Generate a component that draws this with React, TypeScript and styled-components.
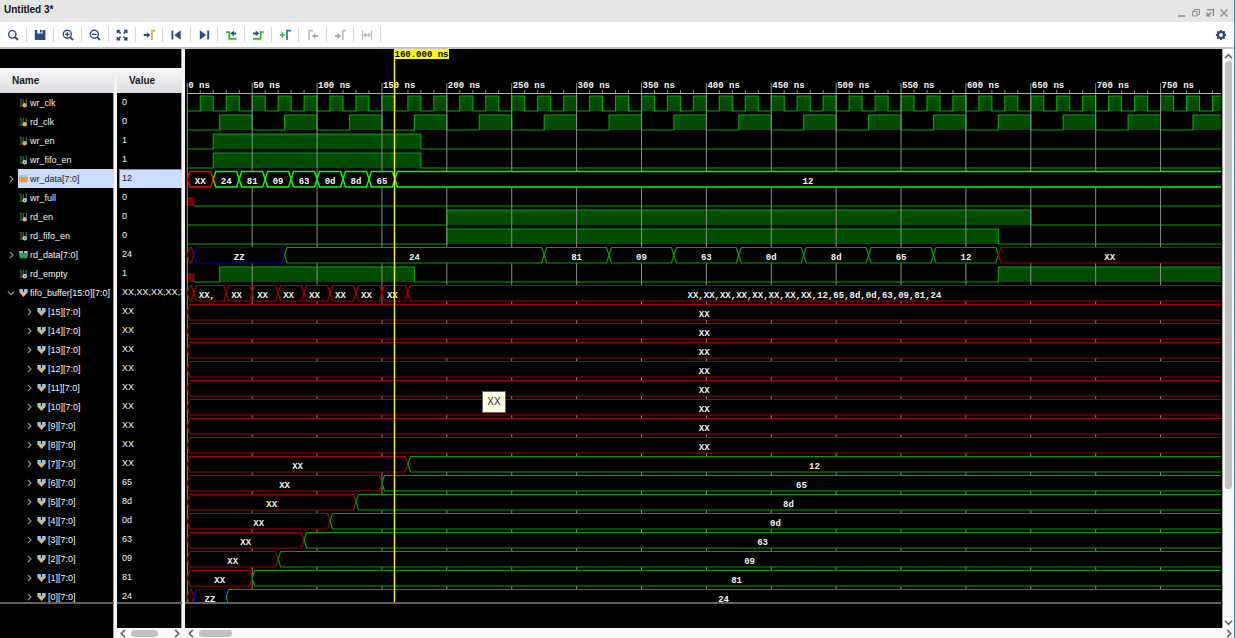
import React, { useLayoutEffect, useRef, useState } from "react";
import styled, { createGlobalStyle } from "styled-components";

const GlobalStyle = createGlobalStyle`
  * { box-sizing: border-box; }
  body { margin: 0; background: #000; font-family: "Liberation Sans", Arial, sans-serif; font-size: 9px; }
  button { appearance: none; border: 0; background: none; padding: 0; margin: 0; font: inherit; color: inherit; cursor: pointer; }
  ul { list-style: none; margin: 0; padding: 0; }
`;

const ROW = 19;
const RULER = 44;
const ORIGIN = 2.3;
const SCALE = 1.2977;
const NAVY = "#2b4a85";

/* ---------- layout ---------- */

const Window = styled.div`
  display: flex;
  flex-direction: column;
  height: 100vh;
  overflow: hidden;
  border-right: 1px solid #4f86d8;
`;
const TitleBar = styled.header`
  flex: 0 0 22px;
  display: flex;
  align-items: center;
  justify-content: space-between;
  padding: 0 5px 3px 4px;
  background: #e6e6e6;
`;
const Title = styled.h1`
  margin: 0;
  font-size: 10px;
  line-height: 12px;
  font-weight: bold;
  color: #111;
`;
const WindowButtons = styled.div`
  display: flex;
  gap: 4px;
  padding-top: 6px;
`;
const WindowButton = styled.button`
  width: 10px;
  height: 10px;
  svg { display: block; }
`;
const Toolbar = styled.div`
  flex: 0 0 27px;
  display: flex;
  justify-content: space-between;
  background: #fff;
  border-bottom: 2px solid #c4c4c8;
`;
const Tools = styled.div`
  display: flex;
  width: 381px;
  padding: 5px 0;
`;
const Tool = styled.button`
  flex: 1;
  display: flex;
  align-items: center;
  justify-content: center;
  border-right: 1px solid #d8d8d8;
`;
const SettingsButton = styled.button`
  display: flex;
  align-items: center;
  margin-right: 7px;
`;
const Main = styled.main`
  flex: 1;
  min-height: 0;
  display: flex;
  background: #000;
`;
const SidePanels = styled.section`
  flex: 0 0 185px;
  min-width: 0;
  display: flex;
  flex-direction: column;
  padding-top: 19px;
  border-right: 3px solid #f4f4f4;
  box-shadow: inset -1px 0 #a0a0a0;
`;
const Columns = styled.div`
  flex: 1;
  min-height: 0;
  display: flex;
`;
const Column = styled.div<{ $width: number; $divided?: boolean }>`
  flex: 0 0 ${(p) => p.$width}px;
  min-width: 0;
  display: flex;
  flex-direction: column;
  min-height: 0;
  ${(p) => p.$divided && "border-right: 3px solid #f4f4f4; box-shadow: inset -1px 0 #a0a0a0;"}
`;
const ColumnHeader = styled.div<{ $indent: number }>`
  flex: 0 0 25px;
  padding-left: ${(p) => p.$indent}px;
  line-height: 25px;
  font-size: 10px;
  font-weight: bold;
  color: #1a1a1a;
  background: linear-gradient(#f8f8fa, #dcdce0);
`;
const Viewport = styled.div`
  flex: 1;
  min-height: 0;
  overflow: hidden;
  border-bottom: 2px solid #606060;
`;
const Spacer = styled.div<{ $height: number }>`
  flex: 0 0 ${(p) => p.$height}px;
`;
const NameRow = styled.li<{ $child?: boolean }>`
  display: flex;
  height: ${ROW}px;
  padding-left: ${(p) => (p.$child ? 25 : 7)}px;
  color: #f4f4f4;
`;
const Expander = styled.button`
  width: 8px;
  svg { display: block; }
`;
const NameLabel = styled.span<{ $selected?: boolean }>`
  flex: 1;
  min-width: 0;
  display: flex;
  align-items: center;
  gap: 2px;
  margin-left: 3px;
  padding-left: 1px;
  white-space: nowrap;
  font-size: 9px;
  background: ${(p) => (p.$selected ? "#ccdcff" : "none")};
  color: ${(p) => (p.$selected ? "#222" : "inherit")};
  svg { flex: none; }
`;
const ValueRow = styled.li<{ $selected?: boolean }>`
  height: ${ROW}px;
  line-height: ${ROW}px;
  margin-left: 2px;
  padding-left: 3px;
  overflow: hidden;
  white-space: nowrap;
  font-size: 9px;
  color: ${(p) => (p.$selected ? "#222" : "#f4f4f4")};
  background: ${(p) => (p.$selected ? "#ccdcff" : "none")};
  box-shadow: ${(p) => (p.$selected ? "inset 1px 1px #5b93c8" : "none")};
`;
const WavePanel = styled.section`
  flex: 1;
  min-width: 0;
  display: flex;
  flex-direction: column;
`;
const WaveBody = styled.div`
  flex: 1;
  min-height: 0;
  display: flex;
`;
const WaveArea = styled.div`
  flex: 1;
  min-width: 0;
  display: flex;
  flex-direction: column;
  position: relative;
  padding-right: 1px;
  border-right: 1px solid #a0a0a0;
`;
const WaveSvg = styled.svg`
  display: block;
  text {
    font-family: "Liberation Mono", "Courier New", monospace;
    font-size: 9px;
    font-weight: bold;
    fill: #f4f4f4;
  }
  text.cursor { fill: #000; }
`;
const Tooltip = styled.div`
  position: absolute;
  left: 297px;
  top: 342px;
  width: 24px;
  height: 22px;
  border: 1px solid #666;
  background: #ffffe4;
  color: #333;
  font-size: 10px;
  line-height: 20px;
  text-align: center;
`;
const VScroll = styled.div`
  flex: 0 0 11px;
  display: flex;
  flex-direction: column;
  align-items: center;
  padding: 2px 0 1px;
  background: #fafafa;
`;
const HScroll = styled.div`
  flex: 0 0 10px;
  display: flex;
  align-items: center;
  gap: 3px;
  padding: 0 1px;
  background: #fafafa;
`;
const ScrollArrow = styled.button`
  flex: 0 0 10px;
  svg { display: block; margin: auto; }
`;
const Track = styled.div<{ $vertical?: boolean }>`
  flex: 1;
  display: flex;
  flex-direction: ${(p) => (p.$vertical ? "column" : "row")};
  min-height: 0;
`;
const Thumb = styled.div<{ $length: string; $vertical?: boolean }>`
  border-radius: 4px;
  background: #c1c1c1;
  width: ${(p) => (p.$vertical ? "7px" : p.$length)};
  height: ${(p) => (p.$vertical ? p.$length : "7px")};
`;

/* ---------- icons ---------- */

const Chevron = ({ dir, size = 9, color = "#666", width = 1.8 }: { dir: "left" | "right" | "up" | "down"; size?: number; color?: string; width?: number }) => {
  const d = { left: "M6.5 1 2.5 5l4 4", right: "M3.5 1l4 4-4 4", up: "M1 7l4-4 4 4", down: "M1 3l4 4 4-4" }[dir];
  return (
    <svg width={size} height={size} viewBox="0 0 10 10" fill="none" stroke={color} strokeWidth={width}>
      <path d={d} />
    </svg>
  );
};

const Art = ({ children, size = 14 }: { children: React.ReactNode; size?: number }) => (
  <svg width={size} height={size} viewBox="0 0 14 14" fill="none" stroke={NAVY} strokeWidth="1.4">
    {children}
  </svg>
);

const TOOLS: [string, React.ReactNode][] = [
  ["Search", <Art><circle cx="6.3" cy="6.3" r="3.7" /><path d="M9 9l3 3" strokeWidth="1.8" /></Art>],
  ["Save", <Art><path d="M1.8 2h10.6v10H1.8z" fill={NAVY} stroke="none" /><path d="M4.2 1.5h5.4v4H4.2z" fill="#fff" stroke="none" /><path d="M7 1.8h1.7v2.8H7z" fill={NAVY} stroke="none" /></Art>],
  ["Zoom in", <Art><circle cx="6.3" cy="6.3" r="4" /><path d="M9.2 9.2l2.8 2.8" strokeWidth="1.8" /><path d="M4 6.3h4.6M6.3 4v4.6" strokeWidth="1.3" /></Art>],
  ["Zoom out", <Art><circle cx="6.3" cy="6.3" r="4" /><path d="M9.2 9.2l2.8 2.8" strokeWidth="1.8" /><path d="M4 6.3h4.6" strokeWidth="1.3" /></Art>],
  ["Zoom fit", <Art><path d="M2.4 5.2V2.4h2.8M9 2.4h2.8v2.8M11.8 9v2.8H9M5.2 11.8H2.4V9" strokeWidth="1.5" /><path d="M2.6 2.6l3 3M11.6 2.6l-3 3M11.6 11.6l-3-3M2.6 11.6l3-3" strokeWidth="1.5" /></Art>],
  ["Go to cursor", <Art><path d="M1.8 6h3V4.2L8.4 7 4.8 9.8V8h-3z" fill={NAVY} stroke="none" /><path d="M13.2 2.8H10V12" stroke="#d9b84a" strokeWidth="1.9" /></Art>],
  ["Go to time 0", <Art><path d="M3.4 2.5v9" strokeWidth="1.9" /><path d="M11.7 2.2v9.6L5.3 7z" fill={NAVY} stroke="none" /></Art>],
  ["Go to last time", <Art><path d="M11.2 2.5v9" strokeWidth="1.9" /><path d="M2.8 2.2v9.6L9.2 7z" fill={NAVY} stroke="none" /></Art>],
  ["Previous transition", <Art><path d="M2 4.2h3.4v6.6h7" stroke="#35b52e" strokeWidth="1.8" /><path d="M12.2 4.4H9.8V2.6L6.4 5.4l3.4 2.8V6.4h2.4z" fill={NAVY} stroke="none" /></Art>],
  ["Next transition", <Art><path d="M2 10.8h7.6V4.2H12.6" stroke="#35b52e" strokeWidth="1.8" /><path d="M2 4.4h2.8V2.6l3.4 2.8-3.4 2.8V6.4H2z" fill={NAVY} stroke="none" /></Art>],
  ["Add marker", <Art><path d="M1.8 7h5.4M4.5 4.3v5.4" stroke="#35b52e" strokeWidth="1.6" /><path d="M13 2.6H9V12" stroke="#1f78a8" strokeWidth="1.7" /></Art>],
  ["Previous marker", <Art><path d="M7 2.6H3V12" stroke="#bbb" strokeWidth="1.6" /><path d="M12 7H9.4V5L5.8 8l3.6 3V9H12z" fill="#aaa" stroke="none" /></Art>],
  ["Next marker", <Art><path d="M12.8 2.6H9.8V12" stroke="#bbb" strokeWidth="1.6" /><path d="M1.8 7h2.8V5L8.2 8l-3.6 3V9H1.8z" fill="#aaa" stroke="none" /></Art>],
  ["Swap cursors", <Art><path d="M2.5 2.5v9M11.5 2.5v9M4 7h6M5.8 5.2L4 7l1.8 1.8M8.2 5.2L10 7 8.2 8.8" stroke="#bbb" strokeWidth="1.3" /></Art>],
];

const Gear = () => (
  <svg width="12" height="12" viewBox="0 0 12 12" fill="none" stroke={NAVY}>
    <circle cx="6" cy="6" r="3" strokeWidth="2.2" />
    <path d="M6 .9v1.6M6 9.5v1.6M.9 6h1.6M9.5 6h1.6M2.4 2.4l1.1 1.1M8.5 8.5l1.1 1.1M9.6 2.4L8.5 3.5M3.5 8.5L2.4 9.6" strokeWidth="1.9" />
  </svg>
);

type IconKind = "in" | "net" | "busIn" | "busNet" | "array";

const SignalIcon = ({ kind }: { kind: IconKind }) => {
  if (kind === "in" || kind === "net") {
    const dot = kind === "in" ? "#f3a947" : "#c8cccc";
    return (
      <svg width="9" height="10" viewBox="0 0 9 10" fill="none">
        <path d="M.6 1.3h1.4v6.4M.6 8.1h2.6" stroke="#2f8a4a" strokeWidth="1" />
        <path d="M4.2 .9v5h1.6M7.3 .9v5" stroke="#37895a" strokeWidth="1" />
        <circle cx="5.7" cy="7.2" r="2.3" fill={dot} />
        {kind === "net" && <circle cx="5.7" cy="7.2" r=".8" fill="#444" />}
      </svg>
    );
  }
  const main = kind === "busIn" ? "#e79a3c" : "#3c9a50";
  return (
    <svg width="9" height="10" viewBox="0 0 9 10">
      <path d="M.4 1h3.5v5H1.8L.4 4.8zM5.1 1h3.5v3.8L7.2 6H5.1z" fill="#9fc6da" />
      {kind === "array" ? (
        <path d="M4.5 3.4l2.7 2.7-2.7 2.8-2.7-2.8z" fill="#f6b258" />
      ) : (
        <path d="M.4 3h8.2v4.2L7.4 8.6H5L4.5 7 4 8.6H1.6L.4 7.2z" fill={main} />
      )}
    </svg>
  );
};

/* ---------- signal data ---------- */

type Seg = { from: number; to?: number; kind: "X" | "Z" | "V"; label?: string; left?: boolean };
type Signal = {
  name: string;
  value: string;
  icon: IconKind;
  selected?: boolean;
  open?: boolean;
  child?: boolean;
  unknown?: number;
  highs?: [number, number][];
  bus?: Seg[];
};

const repeat = (start: number, high: number, period: number): [number, number][] =>
  Array.from({ length: Math.ceil(3000 / period) }, (_, i) => [start + i * period, start + i * period + high]);

const values = (start: number, step: number, labels: string[]): Seg[] =>
  labels.map((label, i) => ({ from: start + i * step, to: start + (i + 1) * step, kind: "V", label }));

const LONG = 3000;

const SETTLED: [number, string][] = [[170, "12"], [150, "65"], [130, "8d"], [110, "0d"], [90, "63"], [70, "09"], [50, "81"]];

const elements: Signal[] = Array.from({ length: 16 }, (_, k) => {
  const index = 15 - k;
  const base = { name: `[${index}][7:0]`, icon: "array" as IconKind, child: true };
  if (index > 7) return { ...base, value: "XX", bus: [{ from: 0, kind: "X", label: "XX" }] };
  if (index === 0)
    return { ...base, value: "24", bus: [{ from: 0, to: 5, kind: "X" }, { from: 5, to: 30, kind: "Z", label: "ZZ" }, { from: 30, kind: "V", label: "24" }] };
  const [at, label] = SETTLED[7 - index];
  return { ...base, value: index === 7 ? "XX" : label, bus: [{ from: 0, to: at, kind: "X", label: "XX" }, { from: at, kind: "V", label }] };
});

const SIGNALS: Signal[] = [
  { name: "wr_clk", value: "0", icon: "in", highs: repeat(10, 10, 20) },
  { name: "rd_clk", value: "0", icon: "in", highs: repeat(25, 25, 50) },
  { name: "wr_en", value: "1", icon: "in", highs: [[20, 180]] },
  { name: "wr_fifo_en", value: "1", icon: "net", highs: [[20, 180]] },
  {
    name: "wr_data[7:0]", value: "12", icon: "busIn", selected: true, open: false,
    bus: [{ from: 0, to: 20, kind: "X", label: "XX" }, ...values(20, 20, ["24", "81", "09", "63", "0d", "8d", "65"]), { from: 160, kind: "V", label: "12" }],
  },
  { name: "wr_full", value: "0", icon: "net", unknown: 5, highs: [] },
  { name: "rd_en", value: "0", icon: "in", highs: [[200, 650]] },
  { name: "rd_fifo_en", value: "0", icon: "net", highs: [[200, 625]] },
  {
    name: "rd_data[7:0]", value: "24", icon: "busNet", open: false,
    bus: [
      { from: 0, to: 5, kind: "X" }, { from: 5, to: 75, kind: "Z", label: "ZZ" }, { from: 75, to: 275, kind: "V", label: "24" },
      ...values(275, 50, ["81", "09", "63", "0d", "8d", "65", "12"]), { from: 625, kind: "X", label: "XX" },
    ],
  },
  { name: "rd_empty", value: "1", icon: "net", unknown: 5, highs: [[25, 175], [625, LONG]] },
  {
    name: "fifo_buffer[15:0][7:0]", value: "XX,XX,XX,XX,XX", icon: "array", open: true,
    bus: [
      { from: 0, to: 5, kind: "X" }, { from: 5, to: 30, kind: "X", label: "XX,", left: true },
      ...[30, 50, 70, 90, 110, 130, 150].map((from): Seg => ({ from, to: from + 20, kind: "X", label: "XX", left: true })),
      { from: 170, kind: "X", label: "XX,XX,XX,XX,XX,XX,XX,XX,12,65,8d,0d,63,09,81,24" },
    ],
  },
  ...elements,
];

/* ---------- waveform drawing ---------- */

const px = (t: number) => ORIGIN + t * SCALE;

const Digital = ({ signal, y, end }: { signal: Signal; y: number; end: number }) => {
  const highs = (signal.highs ?? []).filter(([a]) => px(a) < end);
  const start = signal.unknown ?? 0;
  let edge = `M${px(start)} ${y + 18}`;
  highs.forEach(([a, b]) => {
    edge += `H${px(a)}V${y + 3}H${Math.min(px(b), end)}`;
    if (px(b) < end) edge += `V${y + 18}`;
  });
  edge += `H${end}`;
  return (
    <g fill="none">
      {highs.map(([a, b]) => (
        <rect key={a} x={px(a)} y={y + 3} width={Math.min(px(b), end) - px(a)} height={15} fill="#004c00" />
      ))}
      <path d={edge} stroke="#00ac00" strokeWidth="1.1" />
      {signal.unknown && (
        <path d={`M${px(0)} ${y + 18}V${y + 10}H${px(start)}V${y + 18}`} fill="#780000" stroke="#b00000" />
      )}
    </g>
  );
};

const Bus = ({ signal, y, end }: { signal: Signal; y: number; end: number }) => {
  const top = y + 2.5;
  const bottom = y + 18;
  const mid = y + 10;
  const bright = signal.selected;
  return (
    <g>
      {signal.bus!.map((s) => {
        const a = px(s.from);
        const open = s.to === undefined;
        const b = open ? end : px(s.to!);
        const color = s.kind === "X" ? (bright ? "#ff0000" : "#a80000") : s.kind === "Z" ? "#0000c8" : bright ? "#00ff00" : "#00a400";
        const d = open
          ? `M${b} ${top}H${a + 2.5}L${a} ${mid}L${a + 2.5} ${bottom}H${b}`
          : `M${a} ${mid}L${a + 2.5} ${top}H${b - 2.5}L${b} ${mid}L${b - 2.5} ${bottom}H${a + 2.5}Z`;
        return (
          <g key={s.from}>
            <path d={d} fill="#000" stroke={color} strokeWidth={bright ? 1.5 : 1.2} />
            {s.label && (
              <text x={s.left ? a + 5 : (a + b) / 2} y={y + 15} textAnchor={s.left ? "start" : "middle"}>
                {s.label}
              </text>
            )}
          </g>
        );
      })}
    </g>
  );
};

const Waveform = ({ width }: { width: number }) => {
  const end = width;
  const height = RULER + SIGNALS.length * ROW;
  const ticks = Array.from({ length: Math.ceil(end / SCALE / 10) }, (_, i) => i * 10).filter((t) => px(t) < end);
  const rowY = (i: number) => RULER + i * ROW;
  const cursor = Math.round(px(160) - 1) + 0.5;
  return (
    <WaveSvg width={width} height={height} role="img" aria-label="Signal waveforms">
      {SIGNALS.map((s, i) => s.highs && <Digital key={s.name} signal={s} y={rowY(i)} end={end} />)}
      <path
        d={ticks.map((t) => (t % 50 === 0 ? `M${px(t)} 34V${height}` : `M${px(t)} 41V44`)).join("")}
        stroke="#8c8c8c"
        fill="none"
      />
      <path d={`M${px(0)} 44.5H${end}`} stroke="#b4b4b4" />
      {SIGNALS.map((s, i) => s.bus && <Bus key={s.name} signal={s} y={rowY(i)} end={end} />)}
      {ticks.filter((t) => t % 50 === 0).map((t) => (
        <text key={t} x={px(t) + 1} y={39}>{`${t} ns`}</text>
      ))}
      <path d={`M${cursor} 1V${height}`} stroke="#ffff00" strokeWidth="1.4" />
      <rect x={cursor - 0.5} y={0} width={55} height={10} fill="#ffff00" />
      <text className="cursor" x={cursor} y={8}>160.000 ns</text>
    </WaveSvg>
  );
};

/* ---------- page ---------- */

export default function App() {
  const area = useRef<HTMLDivElement>(null);
  const [width, setWidth] = useState(1036);

  useLayoutEffect(() => {
    const el = area.current;
    if (!el) return;
    const measure = () => setWidth(el.clientWidth);
    measure();
    const observer = new ResizeObserver(measure);
    observer.observe(el);
    return () => observer.disconnect();
  }, []);

  return (
    <Window>
      <GlobalStyle />
      <TitleBar>
        <Title>Untitled 3*</Title>
        <WindowButtons>
          <WindowButton aria-label="Minimize"><svg width="10" height="10" stroke="#8a8a8a" fill="none"><path d="M1 8h7" strokeWidth="1.6" /></svg></WindowButton>
          <WindowButton aria-label="Restore"><svg width="10" height="10" stroke="#8a8a8a" fill="none"><path d="M1.5 3.5h4.5v4.5h-4.5zM3.5 3V1.5H8.5V6.5H6.5" /></svg></WindowButton>
          <WindowButton aria-label="Float"><svg width="10" height="10" stroke="#8a8a8a" fill="none"><path d="M2 1.6h6.4v6.4M6 4.2L3 7.2M2 4.4v3.4h3.4" strokeWidth="1.3" /></svg></WindowButton>
          <WindowButton aria-label="Close"><svg width="10" height="10" stroke="#8a8a8a" fill="none"><path d="M1.5 1.5l7 7M8.5 1.5l-7 7" strokeWidth="1.4" /></svg></WindowButton>
        </WindowButtons>
      </TitleBar>
      <Toolbar>
        <Tools>
          {TOOLS.map(([label, icon]) => (
            <Tool key={label} aria-label={label}>{icon}</Tool>
          ))}
        </Tools>
        <SettingsButton aria-label="Settings"><Gear /></SettingsButton>
      </Toolbar>
      <Main>
        <SidePanels>
          <Columns>
            <Column $width={117} $divided>
              <ColumnHeader $indent={12}>Name</ColumnHeader>
              <Viewport>
                <ul>
                  {SIGNALS.map((s) => (
                    <NameRow key={s.name} $child={s.child}>
                      <Expander as={s.bus ? "button" : "span"} aria-label={s.bus ? `Expand ${s.name}` : undefined}>
                        {s.bus && <Chevron dir={s.open ? "down" : "right"} size={8} color="#9a9a9a" width={1.4} />}
                      </Expander>
                      <NameLabel $selected={s.selected}>
                        <SignalIcon kind={s.icon} />
                        {s.name}
                      </NameLabel>
                    </NameRow>
                  ))}
                </ul>
              </Viewport>
              <Spacer $height={34} />
            </Column>
            <Column $width={65}>
              <ColumnHeader $indent={12}>Value</ColumnHeader>
              <Viewport>
                <ul>
                  {SIGNALS.map((s) => (
                    <ValueRow key={s.name} $selected={s.selected}>{s.value}</ValueRow>
                  ))}
                </ul>
              </Viewport>
              <Spacer $height={24} />
              <HScroll>
                <ScrollArrow aria-label="Scroll values left"><Chevron dir="left" /></ScrollArrow>
                <Track><Thumb $length="27px" /></Track>
                <ScrollArrow aria-label="Scroll values right"><Chevron dir="right" /></ScrollArrow>
              </HScroll>
            </Column>
          </Columns>
        </SidePanels>
        <WavePanel>
          <WaveBody>
            <WaveArea>
              <Viewport ref={area}>
                <Waveform width={width} />
              </Viewport>
              <Spacer $height={24} />
              <Tooltip role="tooltip">XX</Tooltip>
            </WaveArea>
            <VScroll>
              <ScrollArrow aria-label="Scroll up"><Chevron dir="up" /></ScrollArrow>
              <Track $vertical><Thumb $vertical $length="77%" /></Track>
              <ScrollArrow aria-label="Scroll down"><Chevron dir="down" /></ScrollArrow>
            </VScroll>
          </WaveBody>
          <HScroll>
            <ScrollArrow aria-label="Scroll left"><Chevron dir="left" /></ScrollArrow>
            <Track><Thumb $length="33px" /></Track>
            <ScrollArrow aria-label="Scroll right"><Chevron dir="right" /></ScrollArrow>
          </HScroll>
        </WavePanel>
      </Main>
    </Window>
  );
}
